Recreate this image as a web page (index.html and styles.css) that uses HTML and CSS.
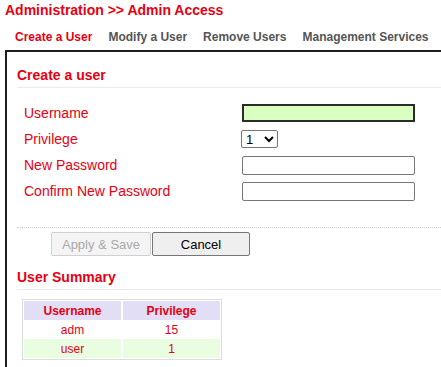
FILE: index.html
```html
<!DOCTYPE html>
<html lang="en">
<head>
    <meta charset="UTF-8">
    <meta name="viewport" content="width=device-width, initial-scale=1.0">
    <title>Administration - Admin Access</title>
    <link rel="stylesheet" href="styles.css">
</head>
<body>
<div class="title">Administration &gt;&gt; Admin Access</div>

<div class="tabs">
    <a class="tab active" href="#">Create a User</a>
    <a class="tab" href="#">Modify a User</a>
    <a class="tab" href="#">Remove Users</a>
    <a class="tab" href="#">Management Services</a>
</div>

<div class="panel">
    <h2 class="section">Create a user</h2>

    <div class="form">
        <label for="username">Username</label>
        <div class="field"><input type="text" id="username" class="text focused"></div>

        <label for="privilege">Privilege</label>
        <div class="field">
            <select id="privilege" class="priv">
                <option>1</option>
                <option>15</option>
            </select>
        </div>

        <label for="new-pass">New Password</label>
        <div class="field"><input type="password" id="new-pass" class="text"></div>

        <label for="confirm-pass">Confirm New Password</label>
        <div class="field"><input type="password" id="confirm-pass" class="text"></div>
    </div>

    <div class="actions">
        <button class="btn" disabled>Apply &amp; Save</button>
        <button class="btn cancel">Cancel</button>
    </div>

    <h2 class="section summary">User Summary</h2>

    <table class="users">
        <tr>
            <th>Username</th>
            <th>Privilege</th>
        </tr>
        <tr>
            <td>adm</td>
            <td>15</td>
        </tr>
        <tr class="alt">
            <td>user</td>
            <td>1</td>
        </tr>
    </table>
</div>
</body>
</html>
```

FILE: styles.css
```css
* {
    margin: 0;
    padding: 0;
    box-sizing: border-box;
}
body {
    font-family: "Liberation Sans", Arial, sans-serif;
    background-color: #ffffff;
    color: #e60012;
    overflow: hidden;
}
.title {
    padding: 2px 5px 0;
    font-size: 14px;
    line-height: 16px;
    font-weight: bold;
    color: #e60012;
}
.tabs {
    display: flex;
    gap: 16px;
    margin-top: 12px;
    padding-left: 15px;
    font-size: 12px;
    line-height: 14px;
    font-weight: bold;
}
.tab {
    color: #555555;
    text-decoration: none;
}
.tab.active {
    color: #e60012;
}
.panel {
    margin: 6px 0 0 5px;
    padding: 0 0 8px 10px;
    border-top: 2px solid #1e1e1e;
    border-left: 2px solid #1e1e1e;
}
.section {
    padding: 15px 0 4px;
    font-size: 14px;
    line-height: 16px;
    font-weight: bold;
    color: #e60012;
    border-bottom: 1px solid #ebebeb;
}
.section.summary {
    padding-top: 13px;
}
.form {
    display: grid;
    grid-template-columns: 218px auto;
    grid-auto-rows: 26px;
    align-items: center;
    padding: 12px 0 0 7px;
}
.form label {
    font-size: 14px;
    line-height: 16px;
    color: #e60012;
}
.field {
    display: flex;
    align-items: center;
}
.text {
    width: 173px;
    height: 19px;
    border: 1px solid #767676;
    border-radius: 2px;
    background-color: #ffffff;
    font-size: 13px;
    padding: 0 3px;
    outline: none;
}
.text.focused {
    height: 18px;
    border: 2px solid #2b2b2b;
    border-radius: 0;
    background-color: #d9ffc1;
}
.priv {
    width: 37px;
    height: 18px;
    margin-left: -1px;
    font-family: "Liberation Sans", Arial, sans-serif;
    font-size: 13px;
    color: #000000;
    border: 1px solid #767676;
    border-radius: 2px;
    background-color: #ffffff;
}
.actions {
    display: flex;
    gap: 1px;
    margin-top: 23px;
    padding: 4px 0 0 34px;
    border-top: 1px dotted #cccccc;
}
.btn {
    width: 100px;
    height: 24px;
    font-family: "Liberation Sans", Arial, sans-serif;
    font-size: 13px;
    color: #000000;
    background-color: #efefef;
    border: 1px solid #767676;
    border-radius: 2px;
}
.btn:disabled {
    color: #a9a9a9;
    background-color: #f4f4f4;
    border-color: #d0d0d0;
}
.btn.cancel {
    width: 98px;
}
.users {
    margin: 9px 0 0 5px;
    width: 200px;
    border: 1px solid #dcdcdc;
    padding: 1px;
    border-spacing: 0;
    font-size: 12px;
    color: #e60012;
    text-align: center;
}
.users th, .users td {
    height: 19px;
    padding: 0;
    line-height: 14px;
}
.users th {
    background-color: #e2def5;
    font-weight: bold;
}
.users th:first-child, .users td:first-child {
    width: 99px;
    border-right: 2px solid #ffffff;
}
.users tr.alt td {
    background-color: #e9fde0;
}
```
